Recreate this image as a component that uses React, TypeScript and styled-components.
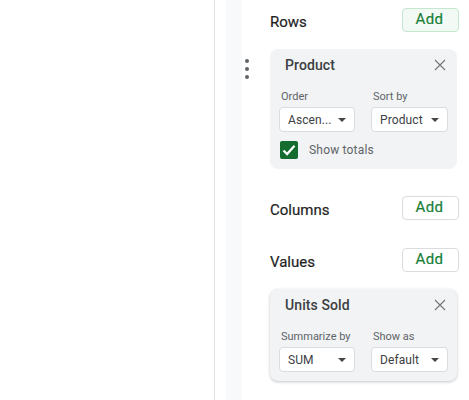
import React from 'react';
import styled, { createGlobalStyle } from 'styled-components';

const GlobalStyle = createGlobalStyle`
  html, body {
    margin: 0;
    padding: 0;
    background: #fff;
    overflow: hidden;
  }
  body {
    font-family: Roboto, "Liberation Sans", sans-serif;
  }
`;

const CloseIcon = () => (
  <svg width="12" height="12" viewBox="0 0 12 12" fill="none" stroke="#70757a" strokeWidth="1.1">
    <path d="M1 1l10 10M11 1L1 11" />
  </svg>
);

const Caret = () => (
  <svg width="8" height="4" viewBox="0 0 8 4">
    <path d="M0 0h8L4 4z" fill="#444746" />
  </svg>
);

const CheckIcon = () => (
  <svg width="14" height="12" viewBox="0 0 14 12" fill="none" stroke="#fff" strokeWidth="2.2">
    <path d="M1.5 6.5l3.6 3.6L12.5 1.8" />
  </svg>
);

const Select = ({ value, wide }: { value: string; wide?: boolean }) => (
  <SelectBox $wide={wide}>
    <span>{value}</span>
    <Caret />
  </SelectBox>
);

export default function App() {
  return (
    <>
      <GlobalStyle />
      <Page>
        <Blank />
        <Spacer />
        <Strip />
        <Panel>
          <Header $height={44} $top={0}>
            <Title>Rows</Title>
            <AddButton $active>Add</AddButton>
          </Header>

          <CardRow>
            <Handle>
              <Dot />
              <Dot />
              <Dot />
            </Handle>
            <Card>
              <CardHead>
                <CardTitle>Product</CardTitle>
                <CloseIcon />
              </CardHead>
              <Fields>
                <Field>
                  <FieldLabel>Order</FieldLabel>
                  <Select value="Ascen..." />
                </Field>
                <Field>
                  <FieldLabel>Sort by</FieldLabel>
                  <Select value="Product" wide />
                </Field>
              </Fields>
              <TotalsRow>
                <Checkbox>
                  <CheckIcon />
                </Checkbox>
                <TotalsLabel>Show totals</TotalsLabel>
              </TotalsRow>
            </Card>
          </CardRow>

          <Header $height={24} $top={27}>
            <Title>Columns</Title>
            <AddButton>Add</AddButton>
          </Header>

          <Header $height={24} $top={28}>
            <Title>Values</Title>
            <AddButton>Add</AddButton>
          </Header>

          <ValuesRow>
            <RaisedCard>
              <CardHead>
                <CardTitle>Units Sold</CardTitle>
                <CloseIcon />
              </CardHead>
              <Fields>
                <Field>
                  <FieldLabel>Summarize by</FieldLabel>
                  <Select value="SUM" />
                </Field>
                <Field>
                  <FieldLabel>Show as</FieldLabel>
                  <Select value="Default" wide />
                </Field>
              </Fields>
            </RaisedCard>
          </ValuesRow>
        </Panel>
      </Page>
    </>
  );
}

const Page = styled.div`
  display: flex;
  width: 469px;
  height: 400px;
  overflow: hidden;
`;

const Blank = styled.div`
  width: 214px;
  flex-shrink: 0;
  border-right: 1px solid #e3e3e3;
`;

const Spacer = styled.div`
  width: 11px;
  flex-shrink: 0;
`;

const Strip = styled.div`
  width: 16px;
  flex-shrink: 0;
  background: #f8f9fa;
`;

const Panel = styled.div`
  width: 227px;
  flex-shrink: 0;
  padding-top: 8px;
  padding-left: 28px;
  box-sizing: border-box;
`;

const Header = styled.div<{ $height: number; $top: number }>`
  display: flex;
  justify-content: space-between;
  align-items: flex-start;
  width: 189px;
  height: ${p => p.$height}px;
  margin-top: ${p => p.$top}px;
`;

const Title = styled.div`
  font-size: 15px;
  font-weight: 400;
  line-height: 20px;
  margin-top: 4px;
  color: #1f1f1f;
  -webkit-text-stroke: 0.2px #1f1f1f;
`;

const AddButton = styled.button<{ $active?: boolean }>`
  width: 57px;
  height: 24px;
  padding: 0 2px 2px 0;
  box-sizing: border-box;
  border-radius: 4px;
  border: 1px solid ${p => (p.$active ? '#c4e7d0' : '#dadce0')};
  background: ${p => (p.$active ? '#f3faf5' : '#fff')};
  color: #188038;
  font-family: inherit;
  font-size: 15px;
  font-weight: 400;
  letter-spacing: 0.4px;
  -webkit-text-stroke: 0.2px #188038;
`;

const CardRow = styled.div`
  display: flex;
  margin-left: -28px;
  margin-top: -3px;
`;

const Handle = styled.div`
  width: 28px;
  flex-shrink: 0;
  padding-top: 10px;
  padding-left: 3px;
  box-sizing: border-box;
  display: flex;
  flex-direction: column;
  gap: 4px;
`;

const Dot = styled.span`
  width: 4px;
  height: 4px;
  border-radius: 50%;
  background: #5f6368;
`;

const Card = styled.div`
  width: 187px;
  height: 120px;
  box-sizing: border-box;
  padding: 6px 11px 0 9px;
  background: #f1f3f4;
  border-radius: 8px;
`;

const ValuesRow = styled.div`
  margin-top: 17px;
`;

const RaisedCard = styled(Card)`
  height: 92px;
  box-shadow: 0 1px 3px rgba(60, 64, 67, 0.3);
`;

const CardHead = styled.div`
  display: flex;
  align-items: center;
  justify-content: space-between;
  height: 20px;
  padding-left: 6px;
  padding-right: 0;
`;

const CardTitle = styled.div`
  font-size: 14px;
  font-weight: 500;
  color: #3c4043;
  letter-spacing: 0.1px;
`;

const Fields = styled.div`
  display: flex;
  gap: 16px;
  margin-top: 15px;
`;

const Field = styled.div`
  display: flex;
  flex-direction: column;
  gap: 3px;
`;

const FieldLabel = styled.div`
  font-size: 11px;
  line-height: 14px;
  padding-left: 2px;
  color: #5f6368;
`;

const SelectBox = styled.div<{ $wide?: boolean }>`
  display: flex;
  align-items: center;
  justify-content: space-between;
  width: ${p => (p.$wide ? 77 : 76)}px;
  height: 25px;
  box-sizing: border-box;
  padding: 0 8px 0 8px;
  background: #fff;
  border: 1px solid #dadce0;
  border-radius: 4px;
  font-size: 12px;
  letter-spacing: 0.1px;
  color: #3c4043;
  white-space: nowrap;
`;

const TotalsRow = styled.div`
  display: flex;
  align-items: center;
  margin-top: 9px;
  padding-left: 1px;
`;

const Checkbox = styled.div`
  width: 18px;
  height: 18px;
  border-radius: 2px;
  background: #146c2e;
  display: flex;
  align-items: center;
  justify-content: center;
`;

const TotalsLabel = styled.div`
  margin-left: 11px;
  font-size: 12px;
  letter-spacing: 0.2px;
  color: #5f6368;
`;
